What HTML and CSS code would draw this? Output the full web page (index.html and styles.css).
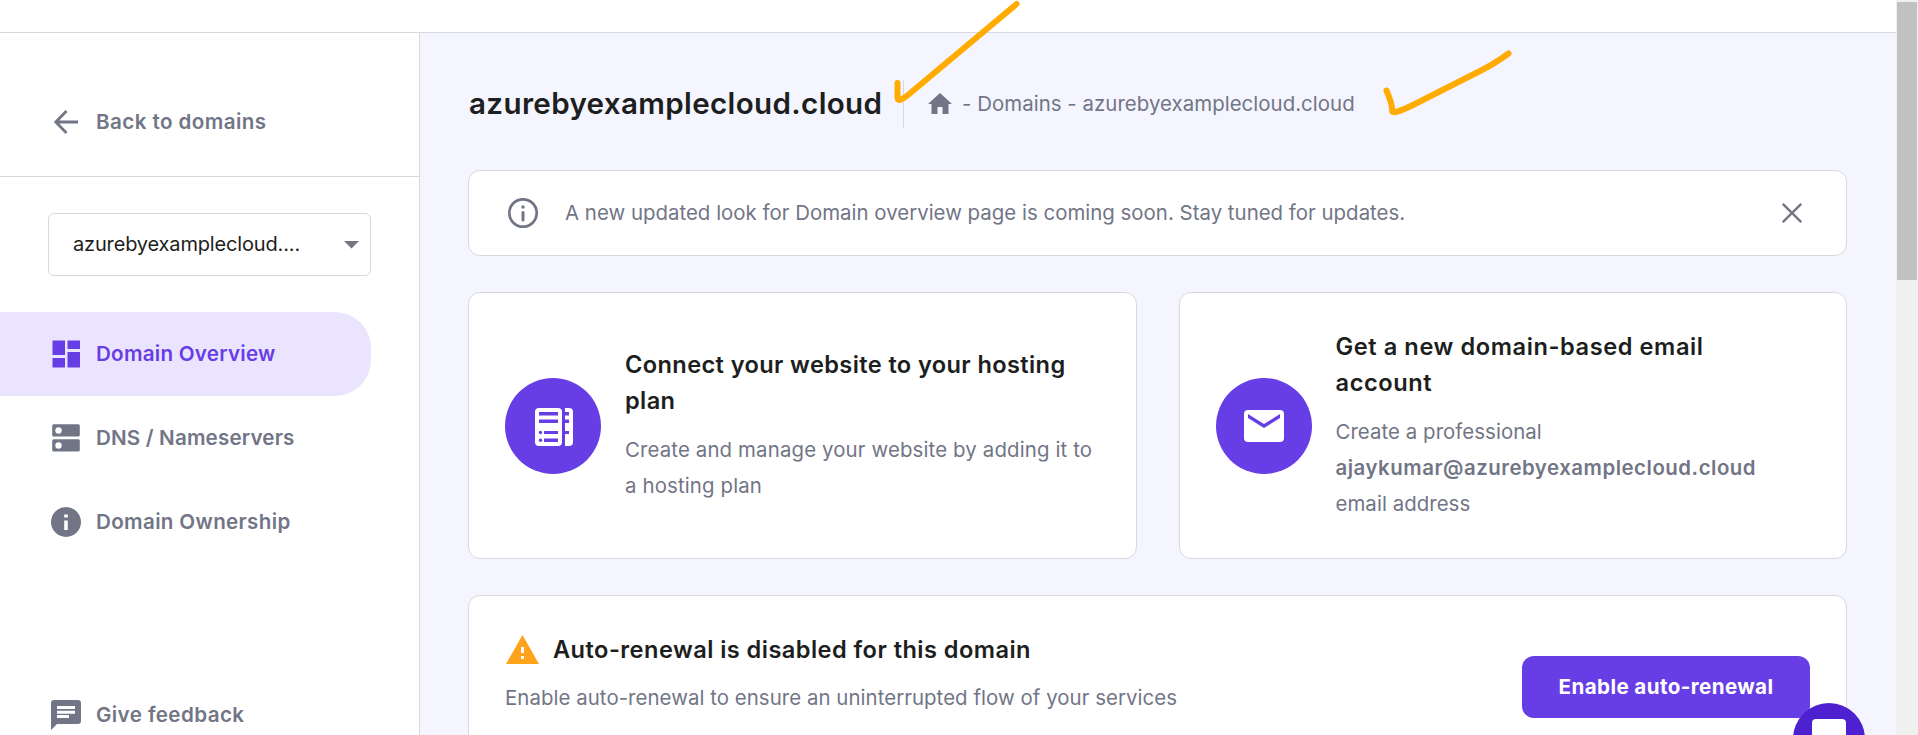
FILE: index.html
```html
<!DOCTYPE html>
<html lang="en">
<head>
<meta charset="utf-8">
<title>Domain Overview</title>
<link rel="stylesheet" href="styles.css">
</head>
<body>
<div class="viewport">
  <div class="page">
    <header class="topbar"></header>
    <div class="body">
      <aside class="sidebar">
        <a class="back">
          <svg class="icon" viewBox="0 0 30 30"><path d="M27 15H5M15.500 4L4.800 15l10.700 11" fill="none" stroke="currentColor" stroke-width="2.800"/></svg>
          <span class="t-back">Back to domains</span>
        </a>
        <div class="select"><span class="t-select">azurebyexamplecloud....</span><svg class="caret" viewBox="0 0 15 8"><path d="M0 0h15L7.500 7.500z" fill="currentColor"/></svg></div>
        <nav class="nav">
          <a class="item active">
            <svg class="icon" viewBox="0 0 30 30" fill="currentColor"><path d="M1.500 1.500h12.500v14.500H1.500zM16.500 1.500h12.500v8.500H16.500zM1.500 19h12.500v9.500H1.500zM16.500 13h12.500v15.500H16.500z"/></svg>
            <span class="t-overview">Domain Overview</span>
          </a>
          <a class="item">
            <svg class="icon" viewBox="0 0 30 30" fill="currentColor"><rect x="1.200" y="1.200" width="27.600" height="12.300" rx="1.500"/><rect x="1.200" y="16.200" width="27.600" height="12.300" rx="1.500"/><circle cx="7.500" cy="7.500" r="3.200" fill="#fff"/><circle cx="7.500" cy="22.500" r="3.200" fill="#fff"/></svg>
            <span class="t-dns">DNS / Nameservers</span>
          </a>
          <a class="item">
            <svg class="icon" viewBox="0 0 30 30"><circle cx="15" cy="15" r="15" fill="currentColor"/><path d="M13.200 7.500h3.600v3h-3.600zM13.200 13.500h3.600V23h-3.600z" fill="#fff"/></svg>
            <span class="t-owner">Domain Ownership</span>
          </a>
        </nav>
        <a class="item feedback">
          <svg class="icon" viewBox="0 0 30 30"><path d="M3 0h24a3 3 0 0 1 3 3v18a3 3 0 0 1-3 3H6l-6 6V3a3 3 0 0 1 3-3z" fill="currentColor"/><path d="M6 6h18v3H6zM6 10.700h18v3H6zM6 15h12v3H6z" fill="#fff"/></svg>
          <span class="t-feedback">Give feedback</span>
        </a>
      </aside>
      <main class="main">
        <div class="heading">
          <h1 class="title">azurebyexamplecloud.cloud</h1>
          <div class="crumbs">
            <svg class="home" viewBox="0 0 24 21"><path d="M12 0l12 11h-3.500v10h-6v-7h-5v7h-6V11H0z" fill="currentColor"/></svg>
            <span class="t-crumbs">- Domains - azurebyexamplecloud.cloud</span>
          </div>
        </div>
        <div class="alert">
          <svg class="icon" viewBox="0 0 30 30"><circle cx="15" cy="15" r="13.700" fill="none" stroke="currentColor" stroke-width="2.700"/><circle cx="15" cy="9" r="1.700" fill="currentColor"/><path d="M15 14.500v7.500" stroke="currentColor" stroke-width="3" stroke-linecap="round"/></svg>
          <span class="t-alert">A new updated look for Domain overview page is coming soon. Stay tuned for updates.</span>
          <svg class="close" viewBox="0 0 20 20"><path d="M.8.8l18.400 18.400M19.200.8L.8 19.200" stroke="currentColor" stroke-width="2.300"/></svg>
        </div>
        <div class="cards">
          <section class="card">
            <span class="disc"><svg class="server" viewBox="0 0 38 38"><rect width="27" height="38" rx="4" fill="#fff"/><path d="M30 0h4a4 4 0 0 1 4 4v30a4 4 0 0 1-4 4h-4z" fill="#fff"/><path d="M4 4h19v3.500H4zM4 11.500h19V15H4zM9 23h14v3H9zM9 30.500h14v3.500H9zM30 4h4v3.500h-4zM30 11.500h4V15h-4zM30 23h4v3h-4z" fill="#673de6"/><circle cx="5.500" cy="24.500" r="1.700" fill="#673de6"/><circle cx="5.500" cy="32.200" r="1.700" fill="#673de6"/></svg></span>
            <div class="copy">
              <h2 class="card-title t-host">Connect your website to your hosting<br>plan</h2>
              <p class="text t-host-p">Create and manage your website by adding it to<br>a hosting plan</p>
            </div>
          </section>
          <section class="card">
            <span class="disc"><svg class="mail" viewBox="0 0 40 32"><rect width="40" height="32" rx="4" fill="#fff"/><path d="M4 4l16 10L36 4v4L20 18 4 8z" fill="#673de6"/></svg></span>
            <div class="copy">
              <h2 class="card-title t-mail">Get a new domain-based email<br>account</h2>
              <p class="text t-mail-p">Create a professional<br><b>ajaykumar@azurebyexamplecloud.cloud</b><br>email address</p>
            </div>
          </section>
        </div>
        <section class="renewal">
          <div class="renewal-copy">
            <div class="renewal-head">
              <svg class="warn" viewBox="0 0 33 29"><path d="M16.500 0L33 29H0z" fill="#ffa31a"/><path d="M15 12h3v6h-3zM15 21h3v3h-3z" fill="#fff"/></svg>
              <h2 class="card-title t-renew">Auto-renewal is disabled for this domain</h2>
            </div>
            <p class="text t-renew-p">Enable auto-renewal to ensure an uninterrupted flow of your services</p>
          </div>
          <button class="button">Enable auto-renewal</button>
        </section>
      </main>
    </div>
  </div>
  <div class="scrollbar"><div class="thumb"></div></div>
  <div class="chat"><svg width="34" height="34" viewBox="0 0 34 34"><rect width="34" height="34" rx="4" fill="#fff"/></svg></div>
  <svg class="marks" viewBox="0 0 1918 735" fill="none" stroke="#ffab00" stroke-width="6" stroke-linecap="round" stroke-linejoin="round"><path d="M1016.500 4L908 95Q898 103 897.500 98V83"/><path d="M1508.500 53.500Q1494 64 1482 70L1413 105Q1392.500 115 1392.300 111Q1392 103 1386.500 90.500"/></svg>
</div>
</body>
</html>
```
FILE: styles.css
```css
* { box-sizing: border-box; }
body { margin: 0; font-family: Inter, "Liberation Sans", sans-serif; font-size: 20.4px; color: #727586; background: #fff; }
h1, h2, p { margin: 0; }
svg { display: block; flex: none; }
.viewport { position: relative; display: flex; width: 100%; height: 735px; overflow: hidden; }
.page { flex: 1; display: flex; flex-direction: column; min-width: 0; }
.topbar { height: 33px; flex: none; border-bottom: 1px solid #d8d9dc; background: #fff; }
.body { flex: 1; display: flex; min-height: 0; }
.sidebar { width: 420px; flex: none; display: flex; flex-direction: column; border-right: 1px solid #d8d9dc; background: #fff; font-size: 20.6px; font-weight: 600; white-space: nowrap; }
.icon { width: 30px; height: 30px; flex: none; }
.back { display: flex; align-items: center; gap: 15px; height: 144px; padding: 35px 0 0 51px; border-bottom: 1px solid #d8d9dc; flex: none; }
.back span, .item span, .crumbs span, .alert span { padding-bottom: 2px; }
.select { display: flex; align-items: center; justify-content: space-between; width: 323px; height: 63px; flex: none; margin: 36px 0 36px 48px; padding: 0 11px 0 24px; border: 1px solid #d8d9dc; border-radius: 6px; color: #1d1e20; font-size: 20px; font-weight: 400; }
.select span { padding-bottom: 2px; }
.caret { width: 15px; height: 8px; color: #727586; }
.item { display: flex; align-items: center; gap: 15px; height: 84px; padding-left: 51px; }
.active { width: 371px; color: #673de6; background: #ebe4ff; border-radius: 0 36px 36px 0; }
.feedback { margin-top: 109px; flex: none; }
.nav { flex: none; }
.main { flex: 1; min-width: 0; display: flex; flex-direction: column; padding: 47px 49px 0 48px; background: #f4f5ff; white-space: nowrap; font-weight: 400; }
.heading { display: flex; height: 48px; margin-bottom: 42px; flex: none; }
.title { width: 436px; padding-left: 1px; border-right: 1px solid #d8d9dc; color: #1d1e20; font-size: 29.6px; line-height: 47px; font-weight: 600; }
.crumbs { display: flex; align-items: center; gap: 10px; padding-left: 24px; }
.home { width: 24px; height: 21px; margin-bottom: 2px; }
.alert { display: flex; align-items: center; height: 86px; flex: none; padding: 0 44px 0 39px; background: #fff; border: 1px solid #d8d9dc; border-radius: 12px; }
.alert .icon { margin-right: 27px; }
.close { width: 20px; height: 20px; margin-left: auto; }
.cards { display: grid; grid-template-columns: 1fr 1fr; gap: 42px; margin: 36px 0; flex: none; }
.card { display: flex; align-items: center; gap: 24px; height: 267px; padding: 0 36px; background: #fff; border: 1px solid #d8d9dc; border-radius: 12px; }
.disc { display: flex; align-items: center; justify-content: center; width: 96px; height: 96px; flex: none; border-radius: 50%; background: #673de6; }
.server { width: 38px; height: 38px; margin: 2px 0 0 2px; }
.mail { width: 40px; height: 32px; }
.card-title { color: #1d1e20; font-size: 23.6px; line-height: 36px; font-weight: 600; }
.text { line-height: 36px; }
.copy .text { margin-top: 13px; }
.text b { font-weight: 600; }
.renewal { display: flex; align-items: flex-start; justify-content: space-between; height: 240px; flex: none; padding: 36px 36px 0; background: #fff; border: 1px solid #d8d9dc; border-radius: 12px 12px 0 0; }
.renewal-head { display: flex; align-items: center; gap: 14px; margin-bottom: 12px; padding-left: 1px; }
.warn { width: 33px; height: 29px; margin-bottom: 2px; }
.button { width: 288px; height: 62px; margin-top: 24px; padding: 0 0 2px; border: 0; border-radius: 12px; background: #673de6; color: #fff; font: 700 20.6px Inter, "Liberation Sans", sans-serif; letter-spacing: .4px; }
.t-back { letter-spacing: .42px; }
.t-select { letter-spacing: -.16px; }
.t-overview { letter-spacing: .25px; }
.t-dns { letter-spacing: .17px; }
.t-owner { letter-spacing: .34px; }
.t-feedback { letter-spacing: .4px; }
.title { letter-spacing: .34px; }
.t-crumbs { letter-spacing: .05px; }
.t-alert { letter-spacing: .02px; }
.t-host { letter-spacing: .38px; }
.t-mail { letter-spacing: .58px; }
.t-renew { letter-spacing: .45px; }
.t-host-p { letter-spacing: .14px; }
.t-mail-p { letter-spacing: .06px; }
.t-mail-p b { letter-spacing: .53px; }
.t-renew-p { letter-spacing: .06px; }
.scrollbar { width: 22px; flex: none; padding: 2px 1px 0; background: #f0f0f0; }
.thumb { height: 278px; background: #c1c1c1; }
.chat { position: absolute; left: 1793px; top: 703px; width: 72px; height: 72px; padding: 16px 19px; border-radius: 50%; background: #4d21cf; }
.marks { position: absolute; left: 0; top: 0; width: 1918px; height: 735px; pointer-events: none; }
```
